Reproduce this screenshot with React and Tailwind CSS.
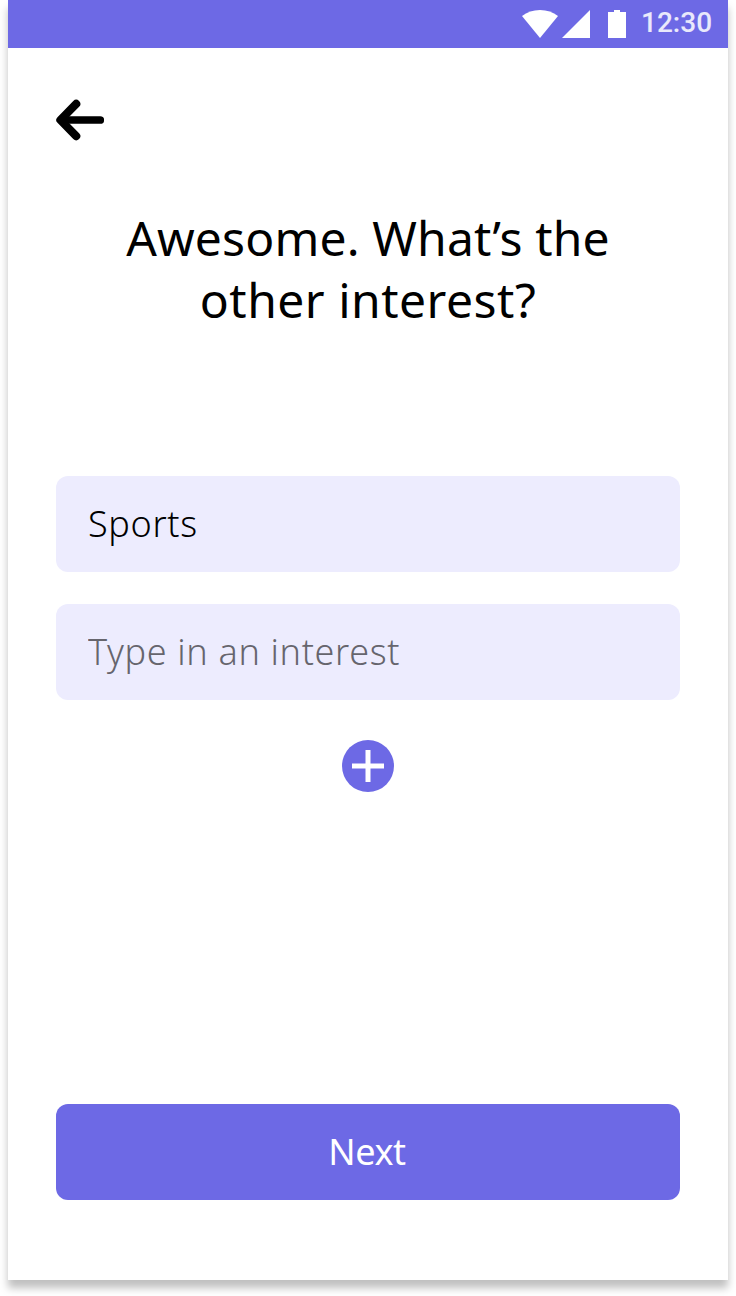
function StatusBar() {
  return (
    <header className="flex h-12 shrink-0 items-center bg-[#6d69e5] pr-4 text-white">
      <svg className="ml-auto h-12 w-[106px]" viewBox="0 0 106 48" fill="currentColor" aria-hidden="true">
        <path d="M20 38 2 16C7 12 13 10 20 10s13 2 18 6L20 38Z" />
        <path d="M42 38 70 10v28H42Z" />
        <path d="M88 12h6v-2h6v2h6v26H88V12Z" />
      </svg>
      <time className="ml-[15px] w-[71px] pb-0.5 font-['Roboto',sans-serif] text-[28px] leading-8 font-medium whitespace-nowrap text-white/85">
        12:30
      </time>
    </header>
  );
}

function BackButton() {
  return (
    <button type="button" aria-label="Back" className="block h-12 w-12">
      <svg className="h-12 w-12" viewBox="0 0 48 48" fill="none" stroke="currentColor" strokeLinecap="round" strokeLinejoin="round" aria-hidden="true">
        <path d="M44.3 24H8" strokeWidth="7.6" />
        <path d="M20.2 7.9 4.4 24l15.8 16.1" strokeWidth="8.2" />
      </svg>
    </button>
  );
}

function InterestField({ value }) {
  return (
    <input
      type="text"
      defaultValue={value}
      placeholder="Type in an interest"
      aria-label="Interest"
      className="block h-24 w-full rounded-xl bg-[#edecfe] px-8 pb-px text-[36px] font-light tracking-[0.65px] text-black outline-none placeholder:text-[#66656d]"
    />
  );
}

export default function App() {
  return (
    <div className="h-[1296px] w-[736px] overflow-hidden bg-white px-2 font-['Noto_Sans',sans-serif]">
      <div className="flex h-[1280px] flex-col bg-white shadow-[0_8px_8px_rgba(0,0,0,0.25)]">
        <StatusBar />
        <main className="flex flex-1 flex-col px-12 pt-12 pb-20">
          <BackButton />
          <h1 className="mt-[63px] text-center text-[48px] leading-[62px] font-normal text-black">
            <span className="tracking-[0.15px]">Awesome. What’s the</span>
            <br />
            <span className="tracking-[0.5px]">other interest?</span>
          </h1>
          <div className="mt-[145px] flex flex-col gap-8">
            <InterestField value="Sports" />
            <InterestField />
          </div>
          <button type="button" aria-label="Add interest" className="mx-auto mt-10 h-[52px] w-[52px] rounded-full bg-[#6d69e5] text-white">
            <svg className="h-[52px] w-[52px]" viewBox="0 0 52 52" stroke="currentColor" strokeWidth="5" aria-hidden="true">
              <path d="M26 10v32M10 26h32" />
            </svg>
          </button>
          <button type="button" className="mt-auto h-24 w-full rounded-xl bg-[#6d69e5] pr-0.5 text-[36px] tracking-[-0.4px] text-white">
            Next
          </button>
        </main>
      </div>
    </div>
  );
}
